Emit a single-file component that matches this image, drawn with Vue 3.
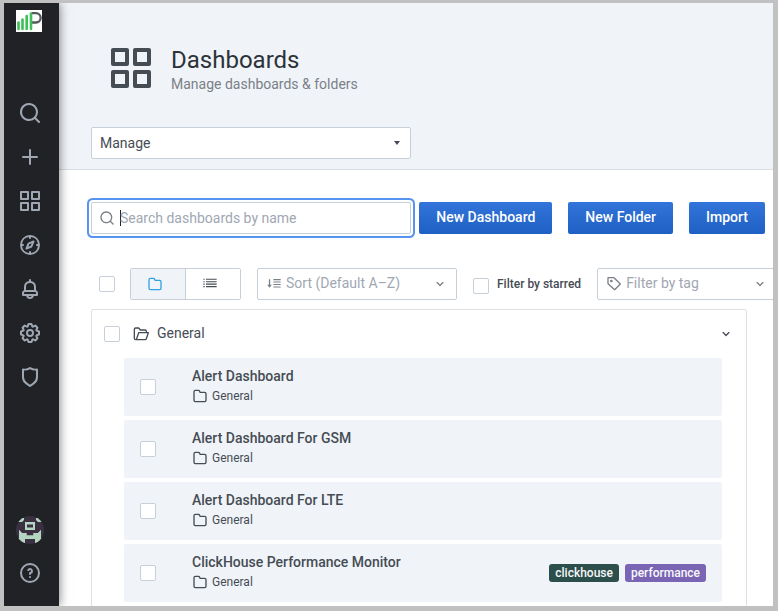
<script setup>
import { ref } from 'vue'

const icons = {
  search: 'M21.71,20.29,18,16.61A9,9,0,1,0,16.61,18l3.68,3.68a1,1,0,0,0,1.42,0A1,1,0,0,0,21.71,20.29ZM11,18a7,7,0,1,1,7-7A7,7,0,0,1,11,18Z',
  plus: 'M19,11H13V5a1,1,0,0,0-2,0v6H5a1,1,0,0,0,0,2h6v6a1,1,0,0,0,2,0V13h6a1,1,0,0,0,0-2Z',
  apps: 'M10,13H3a1,1,0,0,0-1,1v7a1,1,0,0,0,1,1h7a1,1,0,0,0,1-1V14A1,1,0,0,0,10,13ZM9,20H4V15H9ZM21,2H14a1,1,0,0,0-1,1v7a1,1,0,0,0,1,1h7a1,1,0,0,0,1-1V3A1,1,0,0,0,21,2ZM20,9H15V4h5Zm1,4H14a1,1,0,0,0-1,1v7a1,1,0,0,0,1,1h7a1,1,0,0,0,1-1V14A1,1,0,0,0,21,13Zm-1,7H15V15h5ZM10,2H3A1,1,0,0,0,2,3v7a1,1,0,0,0,1,1h7a1,1,0,0,0,1-1V3A1,1,0,0,0,10,2ZM9,9H4V4H9Z',
  compass: 'M12,2A10,10,0,1,0,22,12,10,10,0,0,0,12,2Zm1,17.93V19a1,1,0,0,0-2,0v.93A8,8,0,0,1,4.07,13H5a1,1,0,0,0,0-2H4.07A8,8,0,0,1,11,4.07V5a1,1,0,0,0,2,0V4.07A8,8,0,0,1,19.93,11H19a1,1,0,0,0,0,2h.93A8,8,0,0,1,13,19.93ZM15.14,7.55l-5,2.12a1,1,0,0,0-.52.52l-2.12,5a1,1,0,0,0,.21,1.1,1,1,0,0,0,.7.3.93.93,0,0,0,.4-.09l5-2.12a1,1,0,0,0,.52-.52l2.12-5a1,1,0,0,0-1.31-1.31Zm-2.49,5.1-2.28,1,1-2.28,2.28-1Z',
  bell: 'M18,13.18V10a6,6,0,0,0-5-5.91V3a1,1,0,0,0-2,0V4.09A6,6,0,0,0,6,10v3.18A3,3,0,0,0,4,16v2a1,1,0,0,0,1,1H8.14a4,4,0,0,0,7.72,0H19a1,1,0,0,0,1-1V16A3,3,0,0,0,18,13.18ZM8,10a4,4,0,0,1,8,0v3H8Zm4,10a2,2,0,0,1-1.72-1h3.44A2,2,0,0,1,12,20Zm6-3H6V16a1,1,0,0,1,1-1H17a1,1,0,0,1,1,1Z',
  cog: 'M21.32,9.55l-1.89-.63.89-1.78A1,1,0,0,0,20.13,6L18,3.87a1,1,0,0,0-1.15-.19l-1.78.89-.63-1.89A1,1,0,0,0,13.5,2h-3a1,1,0,0,0-.95.68L8.92,4.57,7.14,3.68A1,1,0,0,0,6,3.87L3.87,6a1,1,0,0,0-.19,1.15l.89,1.78-1.89.63A1,1,0,0,0,2,10.5v3a1,1,0,0,0,.68.95l1.89.63-.89,1.78A1,1,0,0,0,3.87,18L6,20.13a1,1,0,0,0,1.15.19l1.78-.89.63,1.89a1,1,0,0,0,.95.68h3a1,1,0,0,0,.95-.68l.63-1.89,1.78.89A1,1,0,0,0,18,20.13L20.13,18a1,1,0,0,0,.19-1.15l-.89-1.78,1.89-.63A1,1,0,0,0,22,13.5v-3A1,1,0,0,0,21.32,9.55ZM20,12.78l-1.2.4A2,2,0,0,0,17.64,16l.57,1.14-1.1,1.1L16,17.64a2,2,0,0,0-2.79,1.16l-.4,1.2H11.22l-.4-1.2A2,2,0,0,0,8,17.64l-1.14.57-1.1-1.1L6.36,16A2,2,0,0,0,5.2,13.18L4,12.78V11.22l1.2-.4A2,2,0,0,0,6.36,8L5.79,6.89l1.1-1.1L8,6.36A2,2,0,0,0,10.82,5.2l.4-1.2h1.56l.4,1.2A2,2,0,0,0,16,6.36l1.14-.57,1.1,1.1L17.64,8a2,2,0,0,0,1.16,2.79l1.2.4ZM12,8a4,4,0,1,0,4,4A4,4,0,0,0,12,8Zm0,6a2,2,0,1,1,2-2A2,2,0,0,1,12,14Z',
  shield: 'M19.63,3.65a1,1,0,0,0-.84-.2,8,8,0,0,1-6.22-1.27,1,1,0,0,0-1.14,0A8,8,0,0,1,5.21,3.45a1,1,0,0,0-.84.2A1,1,0,0,0,4,4.43v7.45a9,9,0,0,0,3.77,7.33l3.65,2.6a1,1,0,0,0,1.16,0l3.65-2.6A9,9,0,0,0,20,11.88V4.43A1,1,0,0,0,19.63,3.65ZM18,11.88a7,7,0,0,1-2.93,5.7L12,19.77,8.93,17.58A7,7,0,0,1,6,11.88V5.58a10,10,0,0,0,6-1.39,10,10,0,0,0,6,1.39Z',
  help: 'M11.29,15.29a1.58,1.58,0,0,0-.12.15.76.76,0,0,0-.09.18.64.64,0,0,0-.06.18,1.36,1.36,0,0,0,0,.2.84.84,0,0,0,.08.38.9.9,0,0,0,.54.54.94.94,0,0,0,.76,0,.9.9,0,0,0,.54-.54A1,1,0,0,0,13,16a1,1,0,0,0-.29-.71A1,1,0,0,0,11.29,15.29ZM12,2A10,10,0,1,0,22,12,10,10,0,0,0,12,2Zm0,18a8,8,0,1,1,8-8A8,8,0,0,1,12,20ZM12,7A3,3,0,0,0,9.4,8.5a1,1,0,1,0,1.73,1A1,1,0,0,1,12,9a1,1,0,0,1,0,2,1,1,0,0,0-1,1v1a1,1,0,0,0,2,0v-.18A3,3,0,0,0,12,7Z',
  folder: 'M19,5.5H12.72l-.32-1a3,3,0,0,0-2.84-2H5a3,3,0,0,0-3,3v13a3,3,0,0,0,3,3H19a3,3,0,0,0,3-3V8.5A3,3,0,0,0,19,5.5Zm1,13a1,1,0,0,1-1,1H5a1,1,0,0,1-1-1V5.5a1,1,0,0,1,1-1H9.56a1,1,0,0,1,.95.68l.54,1.64A1,1,0,0,0,12,7.5h7a1,1,0,0,1,1,1Z',
  angle: 'M17,9.17a1,1,0,0,0-1.41,0L12,12.71,8.46,9.17a1,1,0,0,0-1.41,0,1,1,0,0,0,0,1.42l4.24,4.24a1,1,0,0,0,1.42,0L17,10.59A1,1,0,0,0,17,9.17Z',
  list: 'M2,4h2v1.700H2ZM6,4h16v1.700H6ZM2,7.700h2v1.700H2ZM6,7.700h16v1.700H6ZM2,11.400h2v1.700H2ZM6,11.400h16v1.700H6ZM2,15.100h2v1.700H2ZM6,15.100h16v1.700H6Z',
  sort: 'M4.300,5h2v8h2.500L5.300,17.500,1.800,13H4.300ZM11,4.500h11v1.700H11ZM11,8.200h11v1.700H11ZM11,11.900h11v1.700H11ZM11,15.600h11v1.700H11Z'
}

const nav = [
  { name: 'Search', icon: 'search' },
  { name: 'Create', icon: 'plus' },
  { name: 'Dashboards', icon: 'apps' },
  { name: 'Explore', icon: 'compass' },
  { name: 'Alerting', icon: 'bell' },
  { name: 'Configuration', icon: 'cog' },
  { name: 'Server admin', icon: 'shield' }
]

const dashboards = [
  { title: 'Alert Dashboard', tags: [] },
  { title: 'Alert Dashboard For GSM', tags: [] },
  { title: 'Alert Dashboard For LTE', tags: [] },
  { title: 'ClickHouse Performance Monitor', tags: ['clickhouse', 'performance'] }
]

const query = ref('')
const layout = ref('folders')
</script>

<template>
  <div class="frame">
    <aside class="sidebar">
      <a class="logo" href="#" aria-label="Home">
        <svg width="26" height="22" viewBox="0 0 26 22">
          <rect width="26" height="22" fill="#fff" />
          <path d="M15.500 3.200H20a4.300 4.300 0 0 1 0 9.300H16" fill="none" stroke="#555a5c" stroke-width="2.300" />
          <g stroke="#3fbf57" stroke-width="2.600" stroke-linecap="round">
            <path d="M2.500 12.500v6.500M6.500 9.500v9.500M10.700 6v13M15 3.500v15.500" />
          </g>
        </svg>
      </a>
      <nav class="menu">
        <a v-for="item in nav" :key="item.name" href="#" :aria-label="item.name">
          <svg class="i24" viewBox="0 0 24 24"><path :d="icons[item.icon]" /></svg>
        </a>
      </nav>
      <nav class="menu bottom">
        <a href="#" aria-label="Profile">
          <svg width="28" height="28" viewBox="0 0 28 28">
            <clipPath id="round"><circle cx="14" cy="14" r="14" /></clipPath>
            <g clip-path="url(#round)">
              <rect width="28" height="28" fill="#3a3042" />
              <path fill="#b4d6c1" fill-rule="evenodd" d="M2 2H8V4L6 6H2ZM20 2H26V6H22L20 4ZM9 6H19V14H9ZM11 8.500V11.500H17V8.500ZM3 14L6 17H10.500V19.500H17.500V17H22L25 14V24L22 22.500H19V28H26V23L25 22H3L2 23V28H9V22.500L3 22Z" />
              <path fill="#b4d6c1" d="M3 14L6 17H10.500V19.500H17.500V17H22L25 14V23H3ZM2 22H9L7 28H2ZM19 22H26V28H21Z" />
            </g>
          </svg>
        </a>
        <a href="#" aria-label="Help">
          <svg class="i24" viewBox="0 0 24 24"><path :d="icons.help" /></svg>
        </a>
      </nav>
    </aside>

    <main class="page">
      <header class="header">
        <div class="heading">
          <svg class="i48" viewBox="0 0 24 24"><path :d="icons.apps" /></svg>
          <div>
            <h1>Dashboards</h1>
            <p>Manage dashboards &amp; folders</p>
          </div>
        </div>
        <div class="field section">
          <select aria-label="Section"><option>Manage</option></select>
          <svg class="caret-icon" viewBox="0 0 8 4"><path d="M1 0H7L4 4Z" /></svg>
        </div>
      </header>

      <div class="content">
        <div class="actions">
          <label class="field search">
            <svg class="i16" viewBox="0 0 24 24"><path :d="icons.search" /></svg>
            <span class="text-cursor"></span>
            <input v-model="query" type="text" placeholder="Search dashboards by name" aria-label="Search dashboards by name" />
          </label>
          <div class="buttons">
            <button class="primary" type="button">New Dashboard</button>
            <button class="primary" type="button">New Folder</button>
            <button class="primary" type="button">Import</button>
          </div>
        </div>

        <div class="filters">
          <input class="check" type="checkbox" aria-label="Select all" />
          <div class="toggle">
            <button type="button" :class="{ active: layout === 'folders' }" aria-label="View by folders" @click="layout = 'folders'">
              <svg class="i16" viewBox="0 0 24 24"><path :d="icons.folder" /></svg>
            </button>
            <button type="button" :class="{ active: layout === 'list' }" aria-label="View as list" @click="layout = 'list'">
              <svg class="i16" viewBox="0 0 24 24"><path :d="icons.list" /></svg>
            </button>
          </div>
          <div class="field sort">
            <svg class="i16" viewBox="0 0 24 24"><path :d="icons.sort" /></svg>
            <select aria-label="Sort"><option>Sort (Default A–Z)</option></select>
            <svg class="i16" viewBox="0 0 24 24"><path :d="icons.angle" /></svg>
          </div>
          <label class="starred">
            <input class="check" type="checkbox" />
            <span>Filter by starred</span>
          </label>
          <div class="field tag-filter">
            <svg class="i16 outline" viewBox="0 0 24 24">
              <path d="M3 2.500H12L21.500 12L13 20.500L3 11.500Z" />
              <circle cx="8" cy="7.500" r="1" />
            </svg>
            <select aria-label="Filter by tag"><option>Filter by tag</option></select>
            <svg class="i16" viewBox="0 0 24 24"><path :d="icons.angle" /></svg>
          </div>
        </div>

        <section class="folder">
          <div class="folder-head">
            <input class="check" type="checkbox" aria-label="Select General" />
            <svg class="i16 outline" viewBox="0 0 24 24">
              <path d="M6 20.500H4a2 2 0 0 1-2-2V5a2 2 0 0 1 2-2H8.500L11 6H18a2 2 0 0 1 2 2V10M8.500 10H23L20 19a2 2 0 0 1-2 1.500H5Z" />
            </svg>
            <h2>General</h2>
            <button type="button" aria-label="Collapse General">
              <svg class="i16" viewBox="0 0 24 24"><path :d="icons.angle" /></svg>
            </button>
          </div>
          <ul>
            <li v-for="item in dashboards" :key="item.title">
              <input class="check" type="checkbox" :aria-label="'Select ' + item.title" />
              <div class="info">
                <a href="#">{{ item.title }}</a>
                <div class="where">
                  <svg class="i16" viewBox="0 0 24 24"><path :d="icons.folder" /></svg>
                  <span>General</span>
                </div>
              </div>
              <div class="tags">
                <span v-for="tag in item.tags" :key="tag" class="tag" :class="tag">{{ tag }}</span>
              </div>
            </li>
          </ul>
        </section>
      </div>
    </main>
  </div>
</template>

<style>
body {
  margin: 0;
}
</style>

<style scoped>
* {
  box-sizing: border-box;
}
.frame {
  display: flex;
  height: 100vh;
  border: solid #c1c1c1;
  border-width: 3px 5px 5px 4px;
  background: #fff;
  color: #464c54;
  font: 14px/20px Roboto, sans-serif;
  overflow: hidden;
}
svg {
  display: block;
  flex: none;
  fill: currentColor;
}
.i16 {
  width: 16px;
  height: 16px;
}
.i24 {
  width: 24px;
  height: 24px;
}
.i48 {
  width: 48px;
  height: 48px;
}
.outline {
  fill: none;
  stroke: currentColor;
  stroke-width: 2;
  stroke-linejoin: round;
}
.sidebar {
  z-index: 1;
  display: flex;
  flex: none;
  flex-direction: column;
  width: 55px;
  padding: 7px 0 12px;
  background: #202226;
  box-shadow: 0 0 10px rgba(0, 0, 0, 0.55);
}
.logo {
  padding-left: 12px;
}
.menu {
  display: flex;
  flex-direction: column;
  padding: 59px 0 0 4px;
  color: #9fa7b3;
}
.menu a {
  display: flex;
  align-items: center;
  justify-content: center;
  width: 44px;
  height: 44px;
  color: inherit;
}
.menu.bottom {
  margin-top: auto;
  padding-top: 0;
}
.bottom a:last-child {
  height: 42px;
}
.page {
  flex: 1;
  min-width: 0;
  overflow: hidden;
}
.header {
  padding: 41px 32px 10px;
  border-bottom: 1px solid #d8dfe6;
  background: #f0f4f9;
}
.heading {
  display: flex;
  gap: 16px;
  padding: 0 16px 33px;
}
.heading > div {
  height: 50px;
}
h1,
h2,
p,
ul {
  margin: 0;
  padding: 0;
}
h1 {
  padding-top: 2px;
  color: #2c3238;
  font-size: 24px;
  font-weight: 400;
  line-height: 28px;
}
p {
  color: #7b8087;
}
.field {
  display: flex;
  align-items: center;
  height: 32px;
  padding: 0 8px;
  border: 1px solid #c7d0d9;
  border-radius: 2px;
  background: #fff;
}
.field select,
.field input {
  flex: 1;
  min-width: 0;
  padding: 0;
  border: 0;
  outline: 0;
  appearance: none;
  background: transparent;
  color: #9fa7b3;
  font: inherit;
}
.field input::placeholder {
  color: #9fa7b3;
  opacity: 1;
}
.section {
  max-width: 320px;
}
.field.section select {
  color: #464c54;
}
.caret-icon {
  width: 8px;
  height: 4px;
  margin-right: 1px;
}
.content {
  padding: 32px 8px 0 32px;
}
.actions {
  display: flex;
  gap: 8px;
}
.search {
  flex: 1;
  padding-left: 7px;
  box-shadow: 0 0 0 2px #fff, 0 0 0 4px #5794f2;
  color: #7b8087;
}
.text-cursor {
  width: 1px;
  height: 16px;
  margin-left: 5px;
  background: #202226;
}
.field.search input {
  margin-left: -1px;
}
.buttons {
  display: flex;
  gap: 16px;
}
.primary {
  height: 32px;
  padding: 0 17px 2px;
  border: 0;
  border-radius: 2px;
  background: linear-gradient(#3274d9, #1f60c4);
  color: #fff;
  font: 700 14px/20px Roboto, sans-serif;
  font-weight: 500;
  white-space: nowrap;
}
.check {
  flex: none;
  width: 16px;
  height: 16px;
  margin: 0;
  border: 1px solid #c7d0d9;
  border-radius: 2px;
  appearance: none;
  background: #fff;
}
.filters {
  display: flex;
  align-items: center;
  gap: 16px;
  padding: 34px 0 9px 8px;
}
.toggle {
  display: flex;
  flex: none;
  width: 111px;
  height: 32px;
  margin-left: -1px;
  border: 1px solid #c7d0d9;
  border-radius: 2px;
}
.toggle button {
  display: flex;
  flex: 1;
  align-items: center;
  justify-content: center;
  padding: 0 6px 0 0;
  border: 0;
  background: #fff;
  color: #464c54;
}
.toggle button + button {
  border-left: 1px solid #c7d0d9;
}
.toggle .active {
  background: #f0f4f9;
  color: #33a2e5;
}
.sort {
  flex: none;
  width: 200px;
  color: #7b8087;
}
.sort select,
.tag-filter select {
  height: 20px;
  margin: 0 0 2px 4px;
}
.starred {
  display: flex;
  flex: none;
  gap: 8px;
  padding-top: 2px;
  font-size: 12px;
  font-weight: 500;
  line-height: 16px;
}
.starred .check {
  margin-top: 2px;
}
.tag-filter {
  flex: none;
  width: 180px;
  color: #7b8087;
}
.folder {
  margin-right: 18px;
  padding: 0 24px 24px 32px;
  border: 1px solid #dce1e6;
  border-radius: 2px;
}
.folder-head {
  display: flex;
  align-items: center;
  height: 48px;
  margin: 0 -12px 0 -20px;
}
.folder-head .outline {
  margin: 0 8px 0 13px;
}
h2 {
  flex: 1;
  padding-bottom: 2px;
  font-size: 14px;
  font-weight: 400;
}
.folder-head button {
  padding: 0;
  border: 0;
  background: none;
  color: inherit;
}
ul {
  display: flex;
  flex-direction: column;
  gap: 4px;
  list-style: none;
}
li {
  display: flex;
  align-items: center;
  height: 58px;
  padding: 0 16px;
  border-radius: 2px;
  background: #f0f4f9;
}
.info {
  flex: 1;
  margin-left: 36px;
  padding-bottom: 2px;
}
.info a {
  display: block;
  color: #464c54;
  font-weight: 500;
  text-decoration: none;
}
.where {
  display: flex;
  align-items: center;
  gap: 4px;
  height: 20px;
  font-size: 12px;
}
.tags {
  display: flex;
  gap: 6px;
}
.tag {
  padding: 0 6px;
  border-radius: 3px;
  color: #f7f8fa;
  font-size: 12px;
  font-weight: 500;
  line-height: 18px;
}
.clickhouse {
  background: #2d4f4b;
}
.performance {
  background: #7a64b4;
}
</style>
